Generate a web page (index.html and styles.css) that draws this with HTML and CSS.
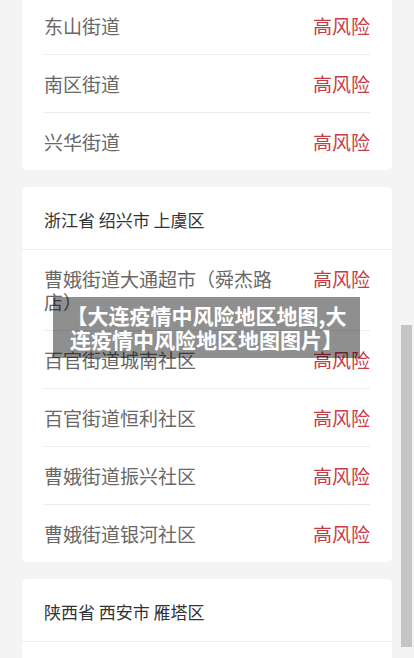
FILE: index.html
```html
<!DOCTYPE html>
<html lang="zh-CN">
<head>
<meta charset="utf-8">
<title>风险地区</title>
<link rel="stylesheet" href="styles.css">
</head>
<body>
<div class="page">
  <section class="card card-first">
    <ul class="rows">
      <li class="row"><span class="name">东山街道</span><span class="level">高风险</span></li>
      <li class="row"><span class="name">南区街道</span><span class="level">高风险</span></li>
      <li class="row"><span class="name">兴华街道</span><span class="level">高风险</span></li>
    </ul>
  </section>
  <section class="card">
    <h3 class="area">浙江省 绍兴市 上虞区</h3>
    <ul class="rows">
      <li class="row"><span class="name">曹娥街道大通超市（舜杰路店）</span><span class="level">高风险</span></li>
      <li class="row"><span class="name">百官街道城南社区</span><span class="level">高风险</span></li>
      <li class="row"><span class="name">百官街道恒利社区</span><span class="level">高风险</span></li>
      <li class="row"><span class="name">曹娥街道振兴社区</span><span class="level">高风险</span></li>
      <li class="row"><span class="name">曹娥街道银河社区</span><span class="level">高风险</span></li>
    </ul>
  </section>
  <section class="card card-last">
    <h3 class="area">陕西省 西安市 雁塔区</h3>
  </section>
</div>
<div class="caption">【大连疫情中风险地区地图,大连疫情中风险地区地图图片】</div>
<div class="scroll-thumb"></div>
</body>
</html>
```

FILE: styles.css
```css
html, body {
  margin: 0;
  padding: 0;
  height: 658px;
  overflow: hidden;
  background: #f4f4f4;
  font-family: "Noto Sans CJK SC", "Noto Sans", sans-serif;
}

.page {
  display: flex;
  flex-direction: column;
  gap: 17px;
  padding: 0 22px;
  margin-top: -3px;
}

.card {
  background: #fff;
  border-radius: 5px;
}

.card-first {
  border-top-left-radius: 0;
  border-top-right-radius: 0;
}

.card-last {
  height: 120px;
}

.area {
  margin: 0;
  padding: 21px 22px 18px;
  font-size: 17px;
  line-height: 23px;
  font-weight: normal;
  color: #333;
  border-bottom: 1px solid #ececec;
}

.rows {
  list-style: none;
  margin: 0;
  padding: 0 22px;
}

.row {
  display: flex;
  justify-content: space-between;
  align-items: flex-start;
  padding: 17px 0;
  font-size: 19px;
  line-height: 23px;
  border-bottom: 1px solid #ececec;
}

.row:last-child {
  border-bottom: none;
}

.name {
  color: #686868;
  max-width: 236px;
}

.level {
  color: #c73c44;
  flex: none;
}

.caption {
  position: absolute;
  left: 53px;
  top: 297px;
  width: 307px;
  height: 61px;
  box-sizing: border-box;
  padding: 6px 8px;
  background: rgba(0, 0, 0, 0.44);
  color: #fff;
  font-size: 21px;
  line-height: 24px;
  font-weight: bold;
  text-align: center;
}

.scroll-thumb {
  position: absolute;
  left: 401px;
  top: 325px;
  width: 11px;
  height: 322px;
  background: #c4c4c4;
}
```
